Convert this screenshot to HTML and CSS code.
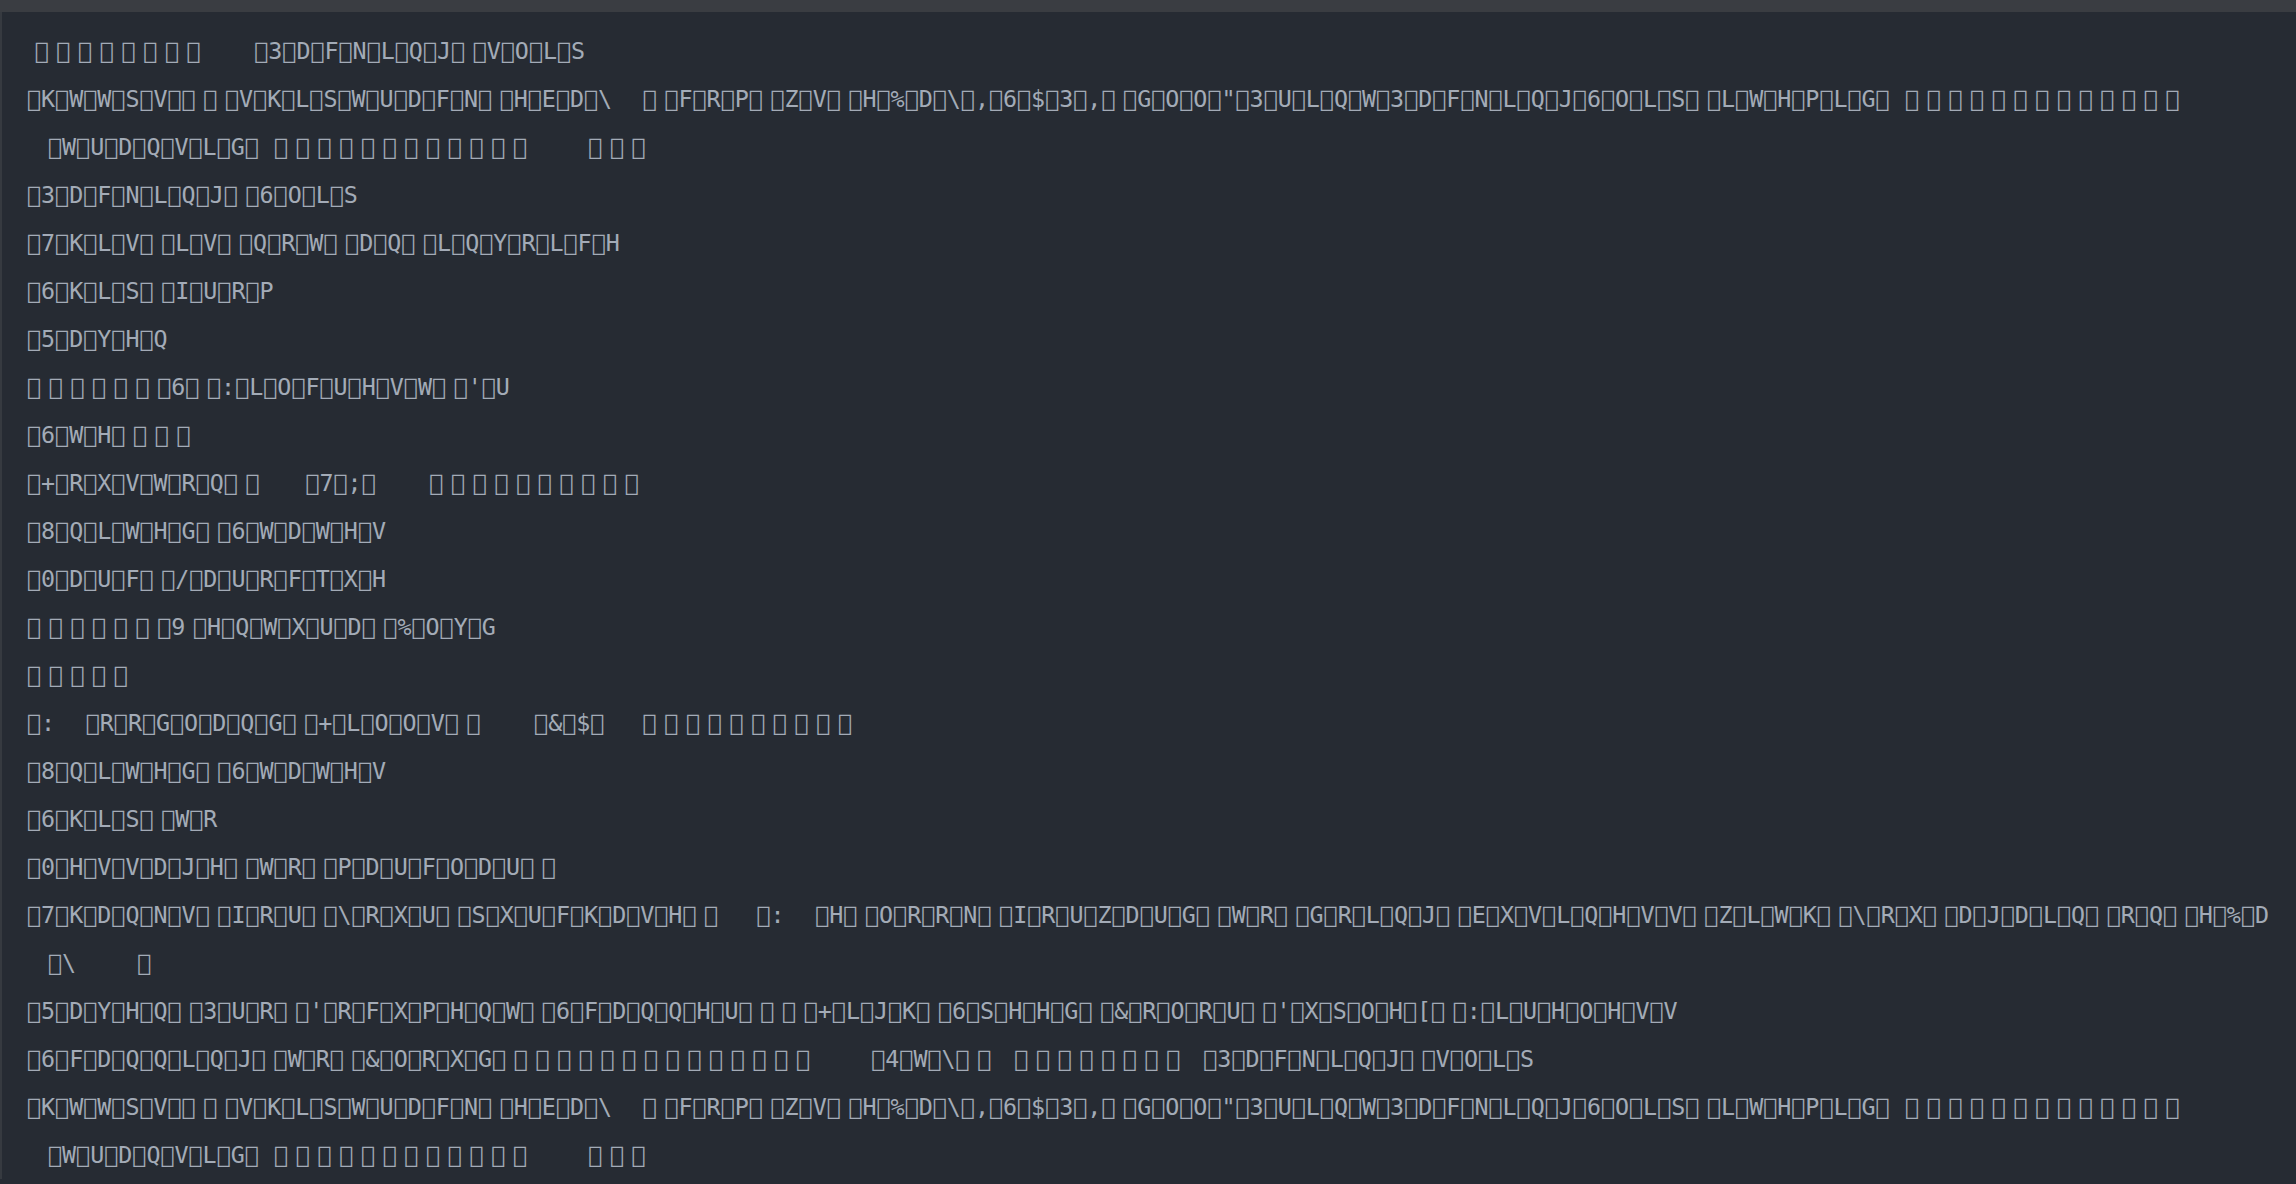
FILE: index.html
```html
<!DOCTYPE html>
<html>
<head>
<meta charset="utf-8">
<title>Packing slip</title>
<link rel="stylesheet" href="styles.css">
</head>
<body>
<div class="topbar"></div>
<main class="doc">
<div class="ln"> &#xE000; &#xE000; &#xE000; &#xE000; &#xE000; &#xE000; &#xE000; &#xE000;       &#xE000;3&#xE000;D&#xE000;F&#xE000;N&#xE000;L&#xE000;Q&#xE000;J&#xE000; &#xE000;V&#xE000;O&#xE000;L&#xE000;S</div>
<div class="ln">&#xE000;K&#xE000;W&#xE000;W&#xE000;S&#xE000;V&#xE000;&#xE000; &#xE000; &#xE000;V&#xE000;K&#xE000;L&#xE000;S&#xE000;W&#xE000;U&#xE000;D&#xE000;F&#xE000;N&#xE000; &#xE000;H&#xE000;E&#xE000;D&#xE000;\    &#xE000; &#xE000;F&#xE000;R&#xE000;P&#xE000; &#xE000;Z&#xE000;V&#xE000; &#xE000;H&#xE000;%&#xE000;D&#xE000;\&#xE000;,&#xE000;6&#xE000;$&#xE000;3&#xE000;,&#xE000; &#xE000;G&#xE000;O&#xE000;O&#xE000;"&#xE000;3&#xE000;U&#xE000;L&#xE000;Q&#xE000;W&#xE000;3&#xE000;D&#xE000;F&#xE000;N&#xE000;L&#xE000;Q&#xE000;J&#xE000;6&#xE000;O&#xE000;L&#xE000;S&#xE000; &#xE000;L&#xE000;W&#xE000;H&#xE000;P&#xE000;L&#xE000;G&#xE000;  &#xE000; &#xE000; &#xE000; &#xE000; &#xE000; &#xE000; &#xE000; &#xE000; &#xE000; &#xE000; &#xE000; &#xE000; &#xE000;</div>
<div class="ln cont">&#xE000;W&#xE000;U&#xE000;D&#xE000;Q&#xE000;V&#xE000;L&#xE000;G&#xE000;  &#xE000; &#xE000; &#xE000; &#xE000; &#xE000; &#xE000; &#xE000; &#xE000; &#xE000; &#xE000; &#xE000; &#xE000;        &#xE000; &#xE000; &#xE000;</div>
<div class="ln">&#xE000;3&#xE000;D&#xE000;F&#xE000;N&#xE000;L&#xE000;Q&#xE000;J&#xE000; &#xE000;6&#xE000;O&#xE000;L&#xE000;S</div>
<div class="ln">&#xE000;7&#xE000;K&#xE000;L&#xE000;V&#xE000; &#xE000;L&#xE000;V&#xE000; &#xE000;Q&#xE000;R&#xE000;W&#xE000; &#xE000;D&#xE000;Q&#xE000; &#xE000;L&#xE000;Q&#xE000;Y&#xE000;R&#xE000;L&#xE000;F&#xE000;H</div>
<div class="ln">&#xE000;6&#xE000;K&#xE000;L&#xE000;S&#xE000; &#xE000;I&#xE000;U&#xE000;R&#xE000;P</div>
<div class="ln">&#xE000;5&#xE000;D&#xE000;Y&#xE000;H&#xE000;Q</div>
<div class="ln">&#xE000; &#xE000; &#xE000; &#xE000; &#xE000; &#xE000; &#xE000;6&#xE000; &#xE000;:&#xE000;L&#xE000;O&#xE000;F&#xE000;U&#xE000;H&#xE000;V&#xE000;W&#xE000; &#xE000;'&#xE000;U</div>
<div class="ln">&#xE000;6&#xE000;W&#xE000;H&#xE000; &#xE000; &#xE000; &#xE000;</div>
<div class="ln">&#xE000;+&#xE000;R&#xE000;X&#xE000;V&#xE000;W&#xE000;R&#xE000;Q&#xE000; &#xE000;      &#xE000;7&#xE000;;&#xE000;       &#xE000; &#xE000; &#xE000; &#xE000; &#xE000; &#xE000; &#xE000; &#xE000; &#xE000; &#xE000;</div>
<div class="ln">&#xE000;8&#xE000;Q&#xE000;L&#xE000;W&#xE000;H&#xE000;G&#xE000; &#xE000;6&#xE000;W&#xE000;D&#xE000;W&#xE000;H&#xE000;V</div>
<div class="ln">&#xE000;0&#xE000;D&#xE000;U&#xE000;F&#xE000; &#xE000;/&#xE000;D&#xE000;U&#xE000;R&#xE000;F&#xE000;T&#xE000;X&#xE000;H</div>
<div class="ln">&#xE000; &#xE000; &#xE000; &#xE000; &#xE000; &#xE000; &#xE000;9 &#xE000;H&#xE000;Q&#xE000;W&#xE000;X&#xE000;U&#xE000;D&#xE000; &#xE000;%&#xE000;O&#xE000;Y&#xE000;G</div>
<div class="ln">&#xE000; &#xE000; &#xE000; &#xE000; &#xE000;</div>
<div class="ln">&#xE000;:    &#xE000;R&#xE000;R&#xE000;G&#xE000;O&#xE000;D&#xE000;Q&#xE000;G&#xE000; &#xE000;+&#xE000;L&#xE000;O&#xE000;O&#xE000;V&#xE000; &#xE000;       &#xE000;&amp;&#xE000;$&#xE000;     &#xE000; &#xE000; &#xE000; &#xE000; &#xE000; &#xE000; &#xE000; &#xE000; &#xE000; &#xE000;</div>
<div class="ln">&#xE000;8&#xE000;Q&#xE000;L&#xE000;W&#xE000;H&#xE000;G&#xE000; &#xE000;6&#xE000;W&#xE000;D&#xE000;W&#xE000;H&#xE000;V</div>
<div class="ln">&#xE000;6&#xE000;K&#xE000;L&#xE000;S&#xE000; &#xE000;W&#xE000;R</div>
<div class="ln">&#xE000;0&#xE000;H&#xE000;V&#xE000;V&#xE000;D&#xE000;J&#xE000;H&#xE000; &#xE000;W&#xE000;R&#xE000; &#xE000;P&#xE000;D&#xE000;U&#xE000;F&#xE000;O&#xE000;D&#xE000;U&#xE000; &#xE000;</div>
<div class="ln">&#xE000;7&#xE000;K&#xE000;D&#xE000;Q&#xE000;N&#xE000;V&#xE000; &#xE000;I&#xE000;R&#xE000;U&#xE000; &#xE000;\&#xE000;R&#xE000;X&#xE000;U&#xE000; &#xE000;S&#xE000;X&#xE000;U&#xE000;F&#xE000;K&#xE000;D&#xE000;V&#xE000;H&#xE000; &#xE000;     &#xE000;:    &#xE000;H&#xE000; &#xE000;O&#xE000;R&#xE000;R&#xE000;N&#xE000; &#xE000;I&#xE000;R&#xE000;U&#xE000;Z&#xE000;D&#xE000;U&#xE000;G&#xE000; &#xE000;W&#xE000;R&#xE000; &#xE000;G&#xE000;R&#xE000;L&#xE000;Q&#xE000;J&#xE000; &#xE000;E&#xE000;X&#xE000;V&#xE000;L&#xE000;Q&#xE000;H&#xE000;V&#xE000;V&#xE000; &#xE000;Z&#xE000;L&#xE000;W&#xE000;K&#xE000; &#xE000;\&#xE000;R&#xE000;X&#xE000; &#xE000;D&#xE000;J&#xE000;D&#xE000;L&#xE000;Q&#xE000; &#xE000;R&#xE000;Q&#xE000; &#xE000;H&#xE000;%&#xE000;D</div>
<div class="ln cont">&#xE000;\        &#xE000;</div>
<div class="ln">&#xE000;5&#xE000;D&#xE000;Y&#xE000;H&#xE000;Q&#xE000; &#xE000;3&#xE000;U&#xE000;R&#xE000; &#xE000;'&#xE000;R&#xE000;F&#xE000;X&#xE000;P&#xE000;H&#xE000;Q&#xE000;W&#xE000; &#xE000;6&#xE000;F&#xE000;D&#xE000;Q&#xE000;Q&#xE000;H&#xE000;U&#xE000; &#xE000; &#xE000; &#xE000;+&#xE000;L&#xE000;J&#xE000;K&#xE000; &#xE000;6&#xE000;S&#xE000;H&#xE000;H&#xE000;G&#xE000; &#xE000;&amp;&#xE000;R&#xE000;O&#xE000;R&#xE000;U&#xE000; &#xE000;'&#xE000;X&#xE000;S&#xE000;O&#xE000;H&#xE000;[&#xE000; &#xE000;:&#xE000;L&#xE000;U&#xE000;H&#xE000;O&#xE000;H&#xE000;V&#xE000;V</div>
<div class="ln">&#xE000;6&#xE000;F&#xE000;D&#xE000;Q&#xE000;Q&#xE000;L&#xE000;Q&#xE000;J&#xE000; &#xE000;W&#xE000;R&#xE000; &#xE000;&amp;&#xE000;O&#xE000;R&#xE000;X&#xE000;G&#xE000; &#xE000; &#xE000; &#xE000; &#xE000; &#xE000; &#xE000; &#xE000; &#xE000; &#xE000; &#xE000; &#xE000; &#xE000; &#xE000; &#xE000;        &#xE000;4&#xE000;W&#xE000;\&#xE000; &#xE000;   &#xE000; &#xE000; &#xE000; &#xE000; &#xE000; &#xE000; &#xE000; &#xE000;   &#xE000;3&#xE000;D&#xE000;F&#xE000;N&#xE000;L&#xE000;Q&#xE000;J&#xE000; &#xE000;V&#xE000;O&#xE000;L&#xE000;S</div>
<div class="ln">&#xE000;K&#xE000;W&#xE000;W&#xE000;S&#xE000;V&#xE000;&#xE000; &#xE000; &#xE000;V&#xE000;K&#xE000;L&#xE000;S&#xE000;W&#xE000;U&#xE000;D&#xE000;F&#xE000;N&#xE000; &#xE000;H&#xE000;E&#xE000;D&#xE000;\    &#xE000; &#xE000;F&#xE000;R&#xE000;P&#xE000; &#xE000;Z&#xE000;V&#xE000; &#xE000;H&#xE000;%&#xE000;D&#xE000;\&#xE000;,&#xE000;6&#xE000;$&#xE000;3&#xE000;,&#xE000; &#xE000;G&#xE000;O&#xE000;O&#xE000;"&#xE000;3&#xE000;U&#xE000;L&#xE000;Q&#xE000;W&#xE000;3&#xE000;D&#xE000;F&#xE000;N&#xE000;L&#xE000;Q&#xE000;J&#xE000;6&#xE000;O&#xE000;L&#xE000;S&#xE000; &#xE000;L&#xE000;W&#xE000;H&#xE000;P&#xE000;L&#xE000;G&#xE000;  &#xE000; &#xE000; &#xE000; &#xE000; &#xE000; &#xE000; &#xE000; &#xE000; &#xE000; &#xE000; &#xE000; &#xE000; &#xE000;</div>
<div class="ln cont">&#xE000;W&#xE000;U&#xE000;D&#xE000;Q&#xE000;V&#xE000;L&#xE000;G&#xE000;  &#xE000; &#xE000; &#xE000; &#xE000; &#xE000; &#xE000; &#xE000; &#xE000; &#xE000; &#xE000; &#xE000; &#xE000;        &#xE000; &#xE000; &#xE000;</div>
</main>
</body>
</html>
```
FILE: styles.css
```css
html, body {
  margin: 0;
  padding: 0;
  background: #262b33;
  overflow: hidden;
}
.topbar {
  height: 12px;
  background: #3a3d42;
}
.doc {
  display: flex;
  flex-direction: column;
  border-left: 2px solid #363a40;
  padding: 15px 0 0 25px;
  color: #a3abb7;
  font-family: "DejaVu Sans Mono", monospace;
  font-size: 23.35px;
  word-spacing: -6.4px;
}
.ln {
  height: 48px;
  line-height: 48px;
  white-space: pre;
}
.cont {
  padding-left: 21px;
}
```
